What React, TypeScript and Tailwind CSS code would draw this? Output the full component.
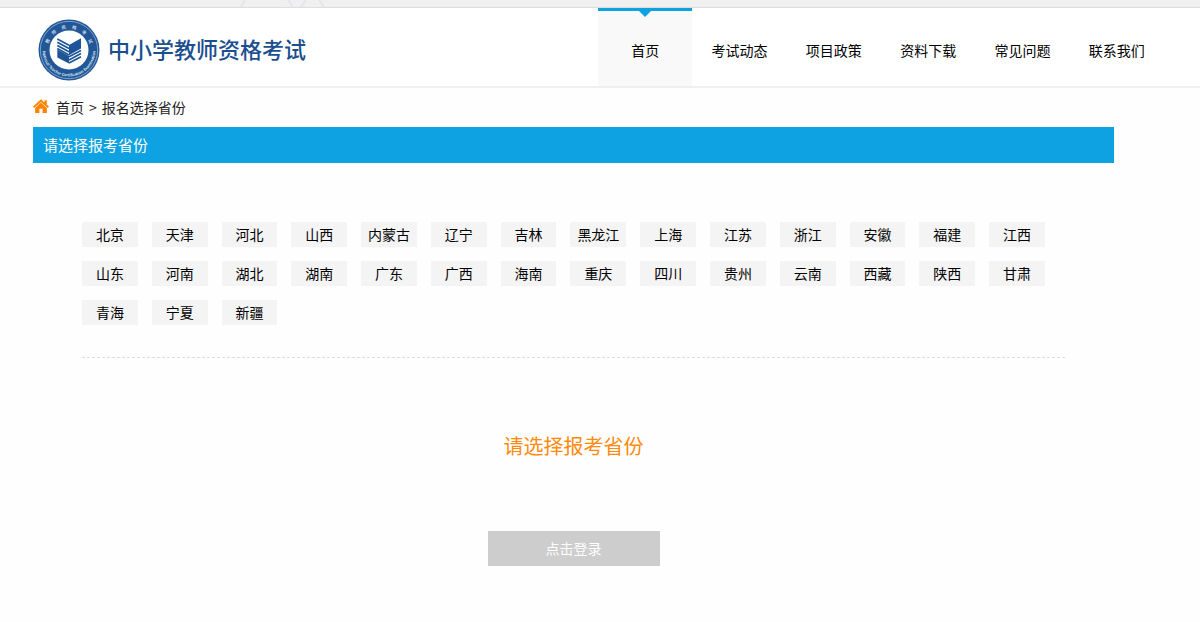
const navItems = ["首页", "考试动态", "项目政策", "资料下载", "常见问题", "联系我们"]

const provinces = [
  "北京", "天津", "河北", "山西", "内蒙古", "辽宁", "吉林", "黑龙江", "上海", "江苏", "浙江", "安徽", "福建", "江西",
  "山东", "河南", "湖北", "湖南", "广东", "广西", "海南", "重庆", "四川", "贵州", "云南", "西藏", "陕西", "甘肃",
  "青海", "宁夏", "新疆",
]

function Seal() {
  return (
    <svg className="w-[62px] h-[62px]" viewBox="0 0 62 62" aria-hidden="true">
      <defs>
        <path id="seal-bottom" d="M4.500 31a26.500 26.500 0 0 0 53 0" />
      </defs>
      <circle cx="31" cy="31" r="30.500" fill="#215796" />
      <circle cx="31" cy="31" r="28.700" fill="none" stroke="#a9c0dc" strokeWidth="0.700" />
      <circle cx="31" cy="31" r="19.500" fill="#fdfefe" />
      <g fill="#c3d4e8" fontSize="4.500" fontWeight="bold" textAnchor="middle">
        {["教", "师", "资", "格", "考", "试"].map((char, i) => (
          <text key={char} x="31" y="9.500" transform={`rotate(${i * 27 - 67.5} 31 31)`}>
            {char}
          </text>
        ))}
      </g>
      <text fill="#dbe6f2" fontSize="3.800" fontWeight="bold" textAnchor="middle">
        <textPath href="#seal-bottom" startOffset="50%">National Teacher Certification Examination</textPath>
      </text>
      {/* open book */}
      <g fill="#1d5596">
        <path d="M31 26L43 19.300V29.500L31 36.200Z" />
        <path d="M19.300 30.500L31 37V44.500L19.300 38.500Z" />
      </g>
      <g fill="none" stroke="#1d5596" strokeWidth="1.700">
        <path d="M19.300 20L31 26.300" />
        <path d="M19.300 23.200L31 29.500" />
        <path d="M19.300 26.400L31 32.700" />
        <path d="M19.300 29.600L31 35.900" />
        <path d="M31 37.800L43 31.500" />
        <path d="M31 40.900L43 34.600" />
        <path d="M31 44L43 37.700" />
      </g>
    </svg>
  )
}

function HomeIcon() {
  return (
    <svg className="w-4 h-4" viewBox="0 0 16 16" fill="#ff8400" aria-hidden="true">
      <path d="M8 .2L11.500 3.400V1.200H13.800V5.500L16 7.600L14.800 9L8 2.900L1.200 9L0 7.600Z" />
      <path d="M8 3.600L13.900 8.900V14H9.600V9.800H6.400V14H2.100V8.900Z" />
    </svg>
  )
}

function Header() {
  return (
    <header className="flex justify-between h-20 pl-[38px] pr-9 bg-white border-b-2 border-[#f0f0f0]">
      <a href="#home" className="flex items-center gap-2 pt-[6px]">
        <Seal />
        <span className="pb-1 text-[22px] leading-8 font-medium text-[#1b4f8f] whitespace-nowrap">中小学教师资格考试</span>
      </a>
      <nav className="grid grid-cols-6 w-[566px]">
        {navItems.map((item, i) => (
          <a
            key={item}
            href={`#nav-${i}`}
            className={
              i === 0
                ? "relative flex items-center justify-center border-t-[3px] border-[#0ea2e2] bg-[#f9f9f9] pt-[2px]"
                : "flex items-center justify-center pt-[5px]"
            }
          >
            {i === 0 && (
              <svg className="absolute top-0 w-3 h-[6px]" viewBox="0 0 12 6" fill="#0ea2e2" aria-hidden="true">
                <path d="M0 0H12L6 6Z" />
              </svg>
            )}
            {item}
          </a>
        ))}
      </nav>
    </header>
  )
}

export default function App() {
  return (
    <div className="min-h-screen bg-[#fefefe] text-sm text-black font-['Noto_Sans_CJK_SC','Liberation_Sans',sans-serif]">
      <div className="flex h-2 bg-[#f0f0f0] border-b border-[#dedede]">
        <svg className="ml-[240px] w-[90px] h-[7px]" viewBox="0 0 90 7" fill="none" stroke="#e4e5ec" strokeWidth="2" aria-hidden="true">
          <path d="M1 7L5 0M48 0L53 7M61 7L66 0M79 0L84 7" />
        </svg>
      </div>
      <Header />
      <main className="ml-[33px] mr-[86px]">
        <div className="flex items-center h-[39px] pb-[2px] text-[#222]">
          <HomeIcon />
          <a href="#home" className="ml-[7px]">首页</a>
          <span className="mx-[5px]">&gt;</span>
          <span>报名选择省份</span>
        </div>
        <h1 className="h-9 px-[10px] bg-[#0ea2e2] text-[15px] leading-9 text-white">请选择报考省份</h1>
        <div className="px-[49px] pt-[59px]">
          <div className="pr-5 pb-8 border-b border-dashed border-[#dedede]">
            <div className="grid grid-cols-14 gap-[14px]">
              {provinces.map((name) => (
                <button key={name} type="button" className="h-[25px] bg-[#f4f4f4] leading-[25px] whitespace-nowrap hover:bg-[#e8e8e8]">
                  {name}
                </button>
              ))}
            </div>
          </div>
        </div>
        <div className="flex flex-col items-center pt-[72px] pb-14">
          <p className="text-xl leading-8 text-[#ff8a0c]">请选择报考省份</p>
          <button type="button" className="mt-[69px] w-[172px] h-[35px] pb-[2px] bg-[#cdcdcd] text-white">
            点击登录
          </button>
        </div>
      </main>
    </div>
  )
}
